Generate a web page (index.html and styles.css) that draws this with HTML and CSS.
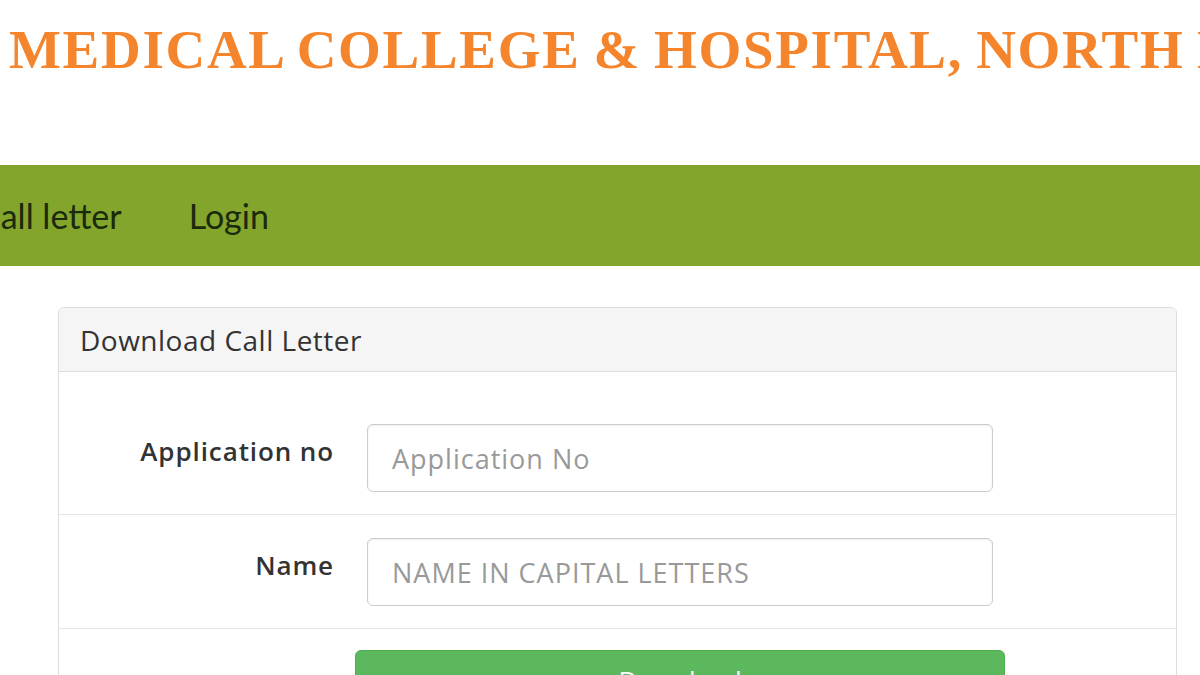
FILE: index.html
```html
<!DOCTYPE html>
<html>
<head>
<meta charset="utf-8">
<link rel="stylesheet" href="styles.css">
</head>
<body>
<h1 class="title">MEDICAL COLLEGE &amp; HOSPITAL, NORTH BENGAL</h1>
<nav class="nav">
  <a class="nav-link nav-first" href="#">Call letter</a>
  <a class="nav-link" href="#">Login</a>
</nav>
<main class="panel">
  <div class="panel-heading">Download Call Letter</div>
  <div class="panel-body">
    <div class="row row-first">
      <label class="label">Application no</label>
      <input class="input" type="text" placeholder="Application No">
    </div>
    <div class="row">
      <label class="label">Name</label>
      <input class="input" type="text" placeholder="NAME IN CAPITAL LETTERS">
    </div>
    <div class="row-btn">
      <button class="btn">Download</button>
    </div>
  </div>
</main>
</body>
</html>
```
FILE: styles.css
```css
html, body {
  margin: 0;
  padding: 0;
  background: #ffffff;
  overflow: hidden;
  width: 1200px;
  height: 675px;
}
.title {
  margin: 18px 0 83px 0;
  padding-left: 9px;
  font-family: "Liberation Serif", "Times New Roman", serif;
  font-weight: bold;
  font-size: 55px;
  letter-spacing: 1.7px;
  word-spacing: -2.5px;
  line-height: 64px;
  color: #f5852c;
  white-space: nowrap;
  overflow: hidden;
}
.nav {
  height: 101px;
  background: #84a52c;
  display: flex;
  align-items: center;
  gap: 67px;
  overflow: hidden;
  white-space: nowrap;
}
.nav-link {
  font-family: "Lato", "Open Sans", sans-serif;
  font-size: 34px;
  color: #1a2a0c;
  text-decoration: none;
}
.nav-first {
  margin-left: -22px;
}
.panel {
  margin: 41px 23px 0 58px;
  border: 1px solid #dddddd;
  border-radius: 6px;
  overflow: hidden;
  font-family: "Open Sans", sans-serif;
}
.panel-heading {
  background: #f5f5f5;
  border-bottom: 1px solid #dddddd;
  height: 64px;
  box-sizing: border-box;
  padding: 0 21px;
  display: flex;
  align-items: center;
  font-size: 28px;
  letter-spacing: 0.5px;
  color: #333333;
}
.row {
  display: grid;
  grid-template-columns: 275px 626px;
  column-gap: 33px;
  align-items: start;
  padding: 23px 0 22px 0;
  border-bottom: 1px solid #e5e5e5;
}
.row-first {
  padding-top: 52px;
}
.label {
  text-align: right;
  font-weight: 600;
  font-size: 26px;
  letter-spacing: 0.9px;
  color: #333333;
  padding-top: 9px;
}
.input {
  height: 68px;
  box-sizing: border-box;
  border: 1px solid #cccccc;
  border-radius: 6px;
  box-shadow: inset 0 1px 2px rgba(0,0,0,0.08);
  padding: 0 24px;
  font-family: "Open Sans", sans-serif;
  font-size: 27px;
  letter-spacing: 1px;
  color: #555555;
  outline: none;
}
.input::placeholder {
  color: #999999;
}
.row-btn {
  padding: 21px 0 0 296px;
}
.btn {
  width: 650px;
  height: 60px;
  background: #5cb85c;
  border: 1px solid #4cae4c;
  border-radius: 6px;
  color: #ffffff;
  font-family: "Open Sans", sans-serif;
  font-size: 26px;
}
```
